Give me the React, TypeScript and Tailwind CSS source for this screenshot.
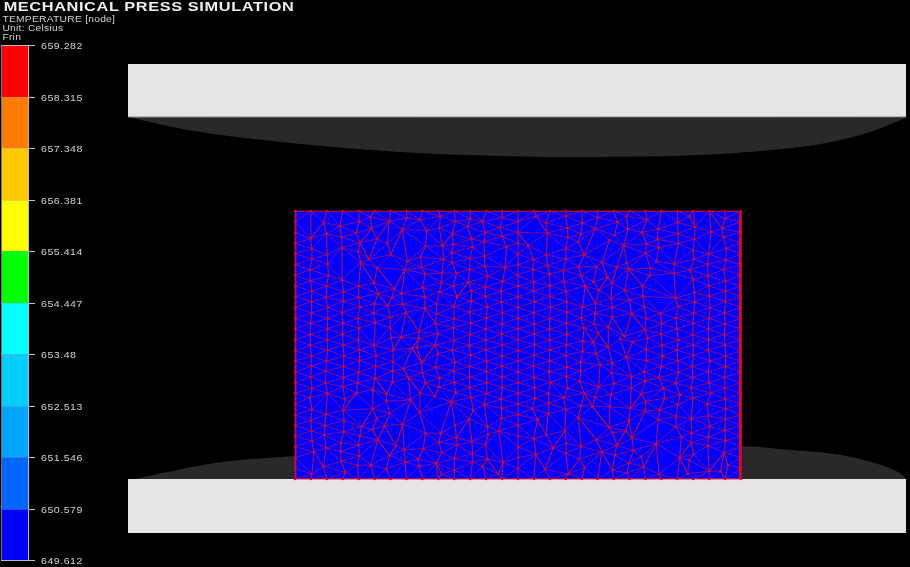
const LEGEND = [
  { label: "659.282", color: "bg-[#ff0000]" },
  { label: "658.315", color: "bg-[#ff7b00]" },
  { label: "657.348", color: "bg-[#ffc800]" },
  { label: "656.381", color: "bg-[#ffff00]" },
  { label: "655.414", color: "bg-[#00ff00]" },
  { label: "654.447", color: "bg-[#00ffff]" },
  { label: "653.48", color: "bg-[#00ccff]" },
  { label: "652.513", color: "bg-[#00a5ff]" },
  { label: "651.546", color: "bg-[#0066ff]" },
  { label: "650.579", color: "bg-[#0000ff]" },
];

function hash(a: number, b: number, s: number) {
  const v = Math.sin(a * 127.1 + b * 311.7 + s * 74.7) * 43758.5453;
  return v - Math.floor(v);
}

type P = [number, number];

function curve(points: P[]) {
  let d = `M${points[0][0]} ${points[0][1]}`;
  for (let i = 0; i < points.length - 1; i++) {
    const p0 = points[Math.max(0, i - 1)];
    const p1 = points[i];
    const p2 = points[i + 1];
    const p3 = points[Math.min(points.length - 1, i + 2)];
    d += ` C${p1[0] + (p2[0] - p0[0]) / 6} ${p1[1] + (p2[1] - p0[1]) / 6} ${p2[0] - (p3[0] - p1[0]) / 6} ${p2[1] - (p3[1] - p1[1]) / 6} ${p2[0]} ${p2[1]}`;
  }
  return d;
}

const X0 = 295, X1 = 741, Y0 = 211, Y1 = 479;
const COLS = 28;
const DY = (Y1 - Y0) / 25;

function irregular(x: number, y: number) {
  const blobs: [number, number, number, number][] = [
    [405, 262, 62, 46], [630, 262, 62, 46], [405, 425, 70, 44], [630, 425, 70, 44],
    [520, 250, 40, 30], [520, 440, 40, 26], [420, 345, 30, 34], [615, 345, 30, 34],
  ];
  let v = 0;
  for (const [bx, by, rx, ry] of blobs) {
    const d = ((x - bx) / rx) ** 2 + ((y - by) / ry) ** 2;
    v = Math.max(v, Math.exp(-d));
  }
  const top = Math.max(0, 1 - (y - Y0) / 34);
  const bottom = Math.max(0, 1 - (Y1 - y) / 42);
  return Math.min(1, Math.max(v, top * 0.75, bottom));
}

function delaunay(pts: P[]): [number, number, number][] {
  const n = pts.length;
  const all: P[] = [...pts, [-2000, -2000], [3500, -2000], [700, 4000]];
  let tris: [number, number, number][] = [[n, n + 1, n + 2]];
  const inCircle = (t: [number, number, number], p: P) => {
    const [a, b, c] = t.map((i) => all[i]);
    const ax = a[0] - p[0], ay = a[1] - p[1];
    const bx = b[0] - p[0], by = b[1] - p[1];
    const cx = c[0] - p[0], cy = c[1] - p[1];
    const det =
      (ax * ax + ay * ay) * (bx * cy - cx * by) -
      (bx * bx + by * by) * (ax * cy - cx * ay) +
      (cx * cx + cy * cy) * (ax * by - bx * ay);
    const orient = (b[0] - a[0]) * (c[1] - a[1]) - (b[1] - a[1]) * (c[0] - a[0]);
    return orient > 0 ? det > 0 : det < 0;
  };
  for (let i = 0; i < n; i++) {
    const bad: [number, number, number][] = [];
    const good: [number, number, number][] = [];
    for (const t of tris) (inCircle(t, pts[i]) ? bad : good).push(t);
    const count = new Map<string, [number, number, number]>();
    for (const t of bad) {
      for (const [a, b] of [[t[0], t[1]], [t[1], t[2]], [t[2], t[0]]]) {
        const key = a < b ? `${a}_${b}` : `${b}_${a}`;
        const cur = count.get(key);
        if (cur) cur[2]++;
        else count.set(key, [a, b, 1]);
      }
    }
    tris = good;
    for (const [a, b, c] of count.values()) if (c === 1) tris.push([a, b, i]);
  }
  return tris.filter((t) => t.every((i) => i < n));
}

function buildMesh() {
  const dx = (X1 - X0) / COLS;
  const pts: P[] = [];
  for (let i = 0; i <= COLS; i++) {
    pts.push([X0 + i * dx, Y0], [X0 + i * dx, Y1]);
  }
  for (let j = 1; j < 25; j++) {
    pts.push([X0, Y0 + j * DY], [X1, Y0 + j * DY]);
  }
  for (let i = 1; i < COLS; i++) {
    const odd = i % 2 === 1;
    const x = X0 + i * dx;
    for (let j = 0; j <= 25; j++) {
      const y = Y0 + (j + (odd ? 0.5 : 0)) * DY;
      if (y <= Y0 + 4 || y >= Y1 - 4) continue;
      if (i === 14) {
        pts.push([x, y]);
        continue;
      }
      const r = irregular(x, y);
      if (hash(i, j, 5) < 0.3 * r) continue;
      const jx = (hash(i, j, 1) - 0.5) * (1.6 + 13 * r);
      const jy = (hash(i, j, 2) - 0.5) * (0.8 + 8 * r);
      pts.push([x + jx, Math.max(Y0 + 5, Math.min(Y1 - 5, y + jy))]);
    }
  }
  const tris = delaunay(pts);
  const seen = new Set<string>();
  let steep = "";
  let flat = "";
  for (const t of tris) {
    for (const [a, b] of [[t[0], t[1]], [t[1], t[2]], [t[2], t[0]]]) {
      const key = a < b ? `${a}_${b}` : `${b}_${a}`;
      if (seen.has(key)) continue;
      seen.add(key);
      const p = pts[a], q = pts[b];
      const seg = `M${p[0].toFixed(1)} ${p[1].toFixed(1)}L${q[0].toFixed(1)} ${q[1].toFixed(1)}`;
      if (Math.abs(q[1] - p[1]) > Math.abs(q[0] - p[0]) * 1.2) steep += seg;
      else flat += seg;
    }
  }
  return { steep, flat, nodes: pts };
}

const mesh = buildMesh();

const upper: P[] = [[128, 117], [200, 132], [300, 144], [400, 152], [500, 156], [600, 157], [700, 155], [800, 147], [860, 135], [906, 118]];
const lower: P[] = [[135, 479], [215, 463], [295, 456], [400, 449], [518, 445], [640, 444], [741, 446], [785, 449.5], [835, 454], [875, 463], [898, 472], [906, 479]];

export default function App() {
  return (
    <div className="flex w-[910px] h-[567px] overflow-hidden bg-black font-['Liberation_Sans',Arial,sans-serif] text-[#d2d2d2]">
      <div className="flex flex-col w-[128px] shrink-0 relative z-10">
        <div className="pl-[3px] h-[15px] text-[13.5px] leading-[13px] font-bold tracking-[0.5px] whitespace-nowrap text-[#eeeeee] origin-left scale-x-[1.21] blur-[0.3px]">MECHANICAL PRESS SIMULATION</div>
        <div className="pl-[2px] text-[8.5px] leading-[9px] tracking-[0.2px] whitespace-nowrap h-[30px] flex flex-col origin-left scale-x-[1.21] blur-[0.3px]">
          <span>TEMPERATURE [node]</span>
          <span>Unit: Celsius</span>
          <span>Frin</span>
        </div>
        <div className="flex flex-col pl-[1px]">
          {LEGEND.map((row, i) => (
            <div key={row.label} className="flex items-start h-[51.5px]">
              <div className={`w-[28px] h-full border-l border-r border-l-[#707078] border-r-[#b8b8c0] ${row.color} ${i > 0 ? "border-t border-t-[#9aa0b0]/40" : "border-t border-t-[#b8b8c0]"}`} />
              <div className="w-[6px] h-px bg-[#c0c0c0]" />
              <span className="ml-[6px] -mt-[4px] text-[8.5px] leading-[11px] tracking-[0.4px] origin-left scale-x-[1.25] blur-[0.3px]">{row.label}</span>
            </div>
          ))}
          <div className="flex items-start h-0">
            <div className="w-[28px] h-px bg-[#b8b8c0]" />
            <div className="w-[6px] h-px bg-[#c0c0c0]" />
            <span className="ml-[6px] -mt-[4px] text-[8.5px] leading-[11px] tracking-[0.4px] origin-left scale-x-[1.25] blur-[0.3px]">649.612</span>
          </div>
        </div>
      </div>
      <svg className="w-[782px] h-[567px] shrink-0" viewBox="128 0 782 567">
        <path d={`${curve(upper)} Z`} fill="#2a282b" />
        <path d={`${curve(lower)} Z`} fill="#2a282b" />
        <rect x="128" y="64" width="778" height="53" fill="#e6e4e6" />
        <rect x="128" y="116.5" width="778" height="1" fill="#8c8a8c" />
        <rect x="128" y="479" width="778" height="54" fill="#e6e4e6" />
        <rect x={X0} y={Y0} width={X1 - X0} height={Y1 - Y0} fill="#0000ff" />
        <path d={mesh.flat} fill="none" stroke="#a00c74" strokeWidth="0.8" />
        <path d={mesh.steep} fill="none" stroke="#b80c48" strokeWidth="1.1" />
        {mesh.nodes.map((n, i) => (
          <circle key={i} cx={n[0]} cy={n[1]} r="1.2" fill="#c80a38" />
        ))}
        <rect x={X0} y={Y0} width={X1 - X0} height="1" fill="#a80c50" />
        <rect x={X0} y={Y1 - 1} width={X1 - X0} height="1" fill="#a80c50" />
        <rect x={X0} y={Y0} width="1.5" height={Y1 - Y0} fill="#b81040" />
        <rect x={X1 - 2} y={Y0} width="2.5" height={Y1 - Y0} fill="#f00010" />
      </svg>
    </div>
  );
}
